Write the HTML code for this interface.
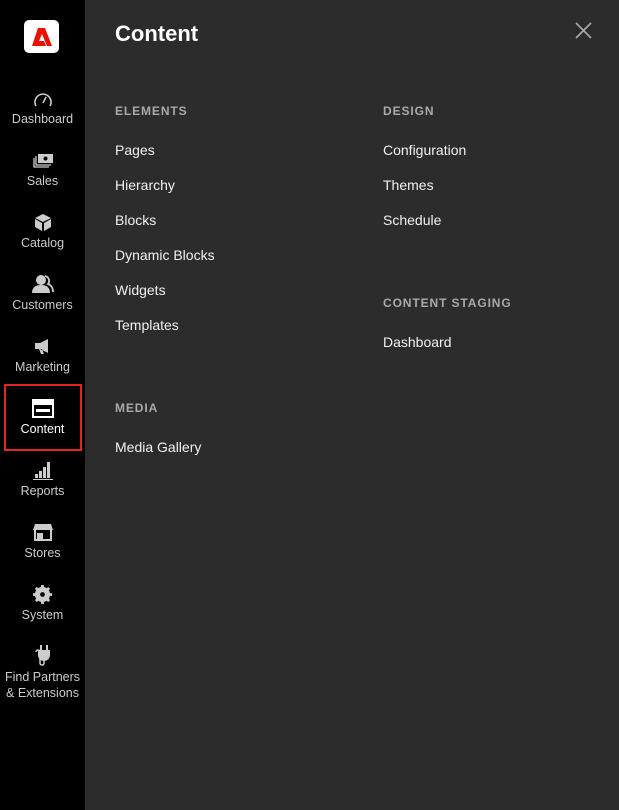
<!DOCTYPE html><html><head><style>
body{margin:0;width:619px;height:810px;background:#2d2c2c;font-family:"Liberation Sans",sans-serif;position:relative;overflow:hidden}
.sb{position:absolute;left:0;top:0;width:85px;height:810px;background:#000}
.logo{position:absolute;left:24px;top:20px;width:35px;height:33px;background:#fff;border-radius:5px}
.it{position:absolute;left:0;width:85px;text-align:center;color:#ccc;font-size:12.5px;line-height:16px}
.ic{height:20px;margin-bottom:3px;display:flex;justify-content:center;align-items:flex-end}
.sel{position:absolute;left:4px;top:384px;width:74px;height:63px;border:2px solid #e22626}
h1{position:absolute;left:115px;top:21px;margin:0;font-size:22px;color:#fff;font-weight:bold}
.h{position:absolute;font-size:12px;font-weight:bold;letter-spacing:0.9px;color:#aaa}
.l{position:absolute;font-size:14px;color:#f1f1f1}
</style></head><body>
<div class="sb">
<div class="logo"><svg width="35" height="33" viewBox="0 0 35 33"><path d="M14 8h7l7 18h-5l-5-12-3 7h5l2 5H8z" fill="#eb1000"/></svg></div>
<div class="it" style="top:88px"><div class="ic"><svg width="20" height="17" viewBox="0 0 20 17"><path d="M3 15a8 8 0 1 1 14 0" fill="none" stroke="#ccc" stroke-width="1.6"/><path d="M10 12l3-6" stroke="#ccc" stroke-width="1.6"/></svg></div>Dashboard</div>
<div class="it" style="top:150px"><div class="ic"><svg width="22" height="17" viewBox="0 0 22 17"><rect x="6" y="1" width="15" height="9" fill="#ccc"/><circle cx="13.5" cy="5.5" r="2" fill="#000"/><path d="M4 3v9h15M2 5v9h15" fill="none" stroke="#ccc" stroke-width="1.3"/></svg></div>Sales</div>
<div class="it" style="top:212px"><div class="ic"><svg width="20" height="19" viewBox="0 0 20 19"><path d="M10 1l8 4-8 4-8-4z M2 6l7 4v8l-7-4z M18 6l-7 4v8l7-4z" fill="#ccc"/></svg></div>Catalog</div>
<div class="it" style="top:274px"><div class="ic"><svg width="22" height="20" viewBox="0 0 22 20"><circle cx="9" cy="6" r="5" fill="#ccc"/><path d="M0 19c0-6 4-8 9-8s9 2 9 8z" fill="#ccc"/><path d="M13 2a5 5 0 0 1 3 8c3 1 5 4 5 8" fill="none" stroke="#ccc" stroke-width="1.8"/></svg></div>Customers</div>
<div class="it" style="top:336px"><div class="ic"><svg width="18" height="18" viewBox="0 0 18 18"><path d="M1 5h5l8-4v14l-8-4H1z M5 11l2 5h3l-2-5z" fill="#ccc"/></svg></div>Marketing</div>
<div class="sel"></div>
<div class="it" style="top:398px;color:#fff"><div class="ic"><svg width="22" height="19" viewBox="0 0 22 19"><rect x="1" y="1" width="20" height="17" fill="none" stroke="#fff" stroke-width="2"/><rect x="1" y="1" width="20" height="5" fill="#fff"/><rect x="4" y="10" width="14" height="3" fill="#fff"/></svg></div>Content</div>
<div class="it" style="top:460px"><div class="ic"><svg width="20" height="19" viewBox="0 0 20 19"><rect x="2" y="13" width="3" height="4" fill="#ccc"/><rect x="6" y="10" width="3" height="7" fill="#ccc"/><rect x="10" y="6" width="3" height="11" fill="#ccc"/><rect x="14" y="1" width="3" height="16" fill="#ccc"/><rect x="0" y="18" width="20" height="1" fill="#ccc"/></svg></div>Reports</div>
<div class="it" style="top:522px"><div class="ic"><svg width="20" height="19" viewBox="0 0 20 19"><path d="M2 1h16l2 6H0z" fill="#ccc"/><path d="M2 7v10h16V7" fill="none" stroke="#ccc" stroke-width="2"/><rect x="4" y="10" width="6" height="7" fill="#ccc"/></svg></div>Stores</div>
<div class="it" style="top:584px"><div class="ic"><svg width="19" height="19" viewBox="0 0 20 20"><circle cx="10" cy="10" r="6" fill="none" stroke="#ccc" stroke-width="4"/><path d="M10 0v20M0 10h20M3 3l14 14M17 3L3 17" stroke="#ccc" stroke-width="3"/><circle cx="10" cy="10" r="2.5" fill="#000"/></svg></div>System</div>
<div class="it" style="top:646px"><div class="ic"><svg width="20" height="22" viewBox="0 0 20 22"><path d="M8 1v5M14 1v5" stroke="#ccc" stroke-width="2"/><path d="M5 6h12v5a6 6 0 0 1-12 0z" fill="#ccc"/><path d="M11 16v3a2 2 0 0 1-4 0V8a2 2 0 0 0-4 0" fill="none" stroke="#ccc" stroke-width="1.5"/></svg></div>Find Partners<br>&amp; Extensions</div>
</div>
<h1>Content</h1>
<svg style="position:absolute;left:575px;top:22px" width="17" height="17"><path d="M1 1l15 15M16 1L1 16" stroke="#aaa" stroke-width="1.6"/></svg>
<div class="h" style="left:115px;top:104px">ELEMENTS</div>
<div class="l" style="left:115px;top:142px">Pages</div>
<div class="l" style="left:115px;top:177px">Hierarchy</div>
<div class="l" style="left:115px;top:212px">Blocks</div>
<div class="l" style="left:115px;top:247px">Dynamic Blocks</div>
<div class="l" style="left:115px;top:282px">Widgets</div>
<div class="l" style="left:115px;top:317px">Templates</div>
<div class="h" style="left:115px;top:401px">MEDIA</div>
<div class="l" style="left:115px;top:439px">Media Gallery</div>
<div class="h" style="left:383px;top:104px">DESIGN</div>
<div class="l" style="left:383px;top:142px">Configuration</div>
<div class="l" style="left:383px;top:177px">Themes</div>
<div class="l" style="left:383px;top:212px">Schedule</div>
<div class="h" style="left:383px;top:296px">CONTENT STAGING</div>
<div class="l" style="left:383px;top:334px">Dashboard</div>
</body></html>
